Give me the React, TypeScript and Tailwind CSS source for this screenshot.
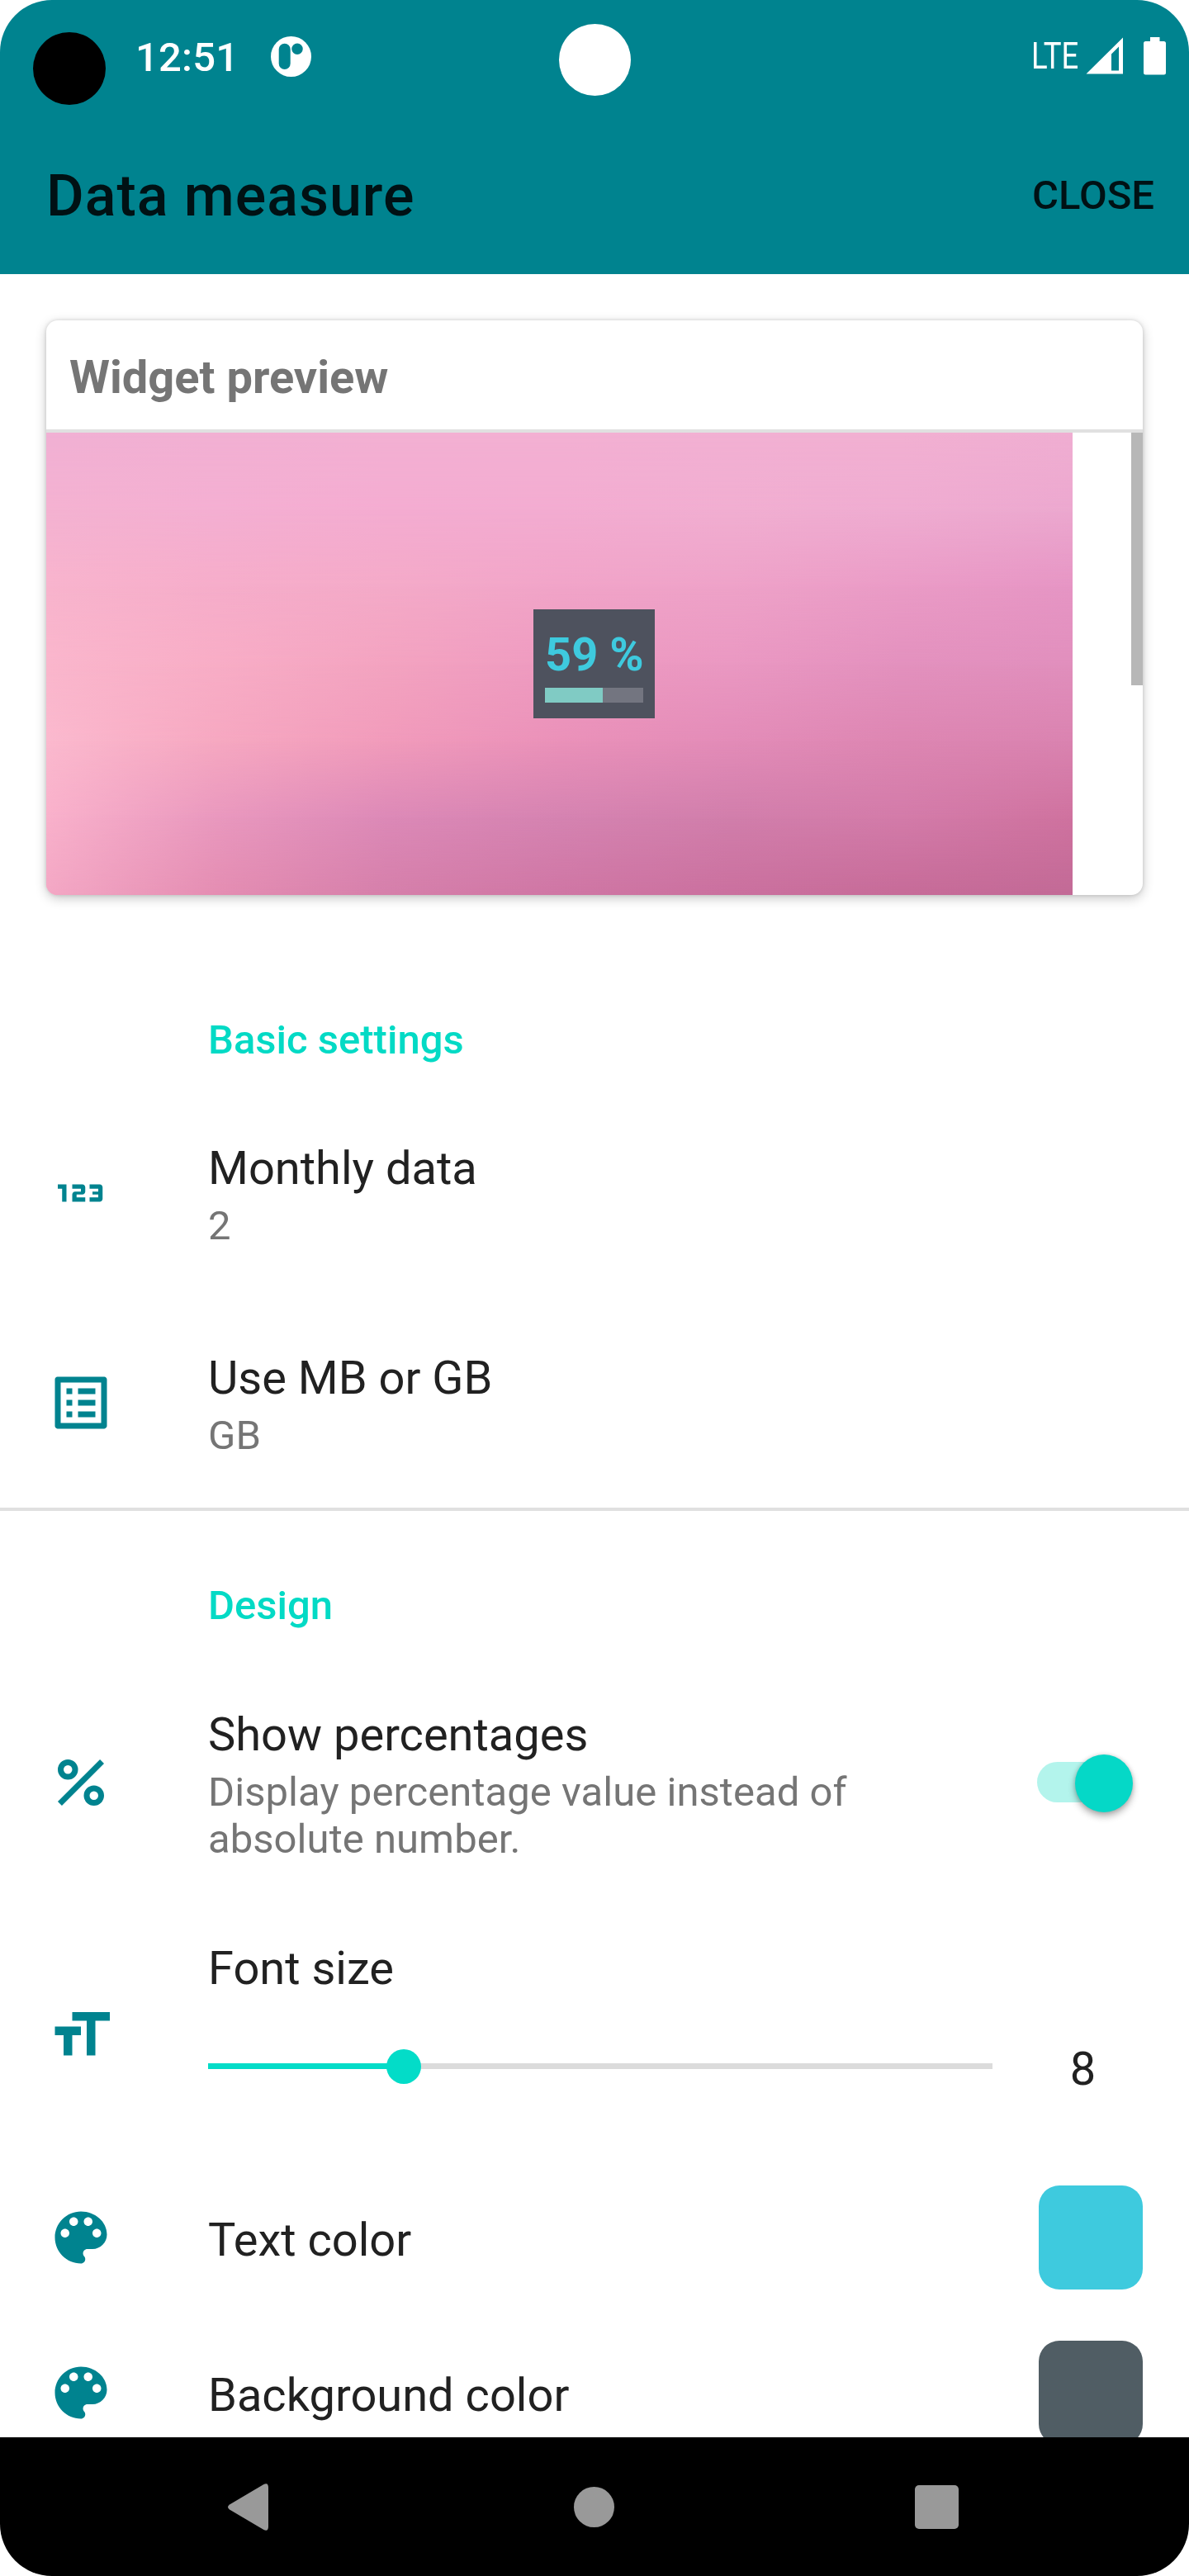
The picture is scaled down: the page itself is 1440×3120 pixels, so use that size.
import React from "react";
import { Md123, MdOutlineListAlt, MdFormatSize } from "react-icons/md";

// Wallpaper colour mesh: each row is a horizontal gradient blended into the next one below it.
const mesh = [
  ["#f1b0d4", "#f2b0d3", "#f3b0d3", "#f3b0d3", "#f2b0d3", "#f2b0d2", "#f0aed2"],
  ["#f4b2d1", "#f4afd2", "#f4acd1", "#f3acd1", "#f1aed1", "#efacd1", "#eca8cf"],
  ["#f8b4cd", "#f6adca", "#f4aac8", "#f1a4c8", "#eea2c8", "#ea9bc6", "#e695c4"],
  ["#fab6cc", "#f8adc6", "#f3a3c0", "#ee9ac0", "#ea98c2", "#e391be", "#e18fbd"],
  ["#fbb9ce", "#f6a8c1", "#f19bbb", "#ea91b9", "#e38cb8", "#dd86b2", "#da83b0"],
  ["#f9b1cb", "#e998be", "#dc89b7", "#d583b1", "#d17eab", "#d37ba9", "#cf729f"],
  ["#f3a7c4", "#e48db2", "#d57faa", "#cf76a4", "#ca709e", "#c66b98", "#c26a96"],
];

function Wallpaper() {
  return (
    <div className="absolute inset-0">
      {mesh.map((row, i) => {
        const from = ((i - 1) / (mesh.length - 1)) * 100;
        const to = (i / (mesh.length - 1)) * 100;
        const mask = i === 0 ? undefined : `linear-gradient(to bottom, transparent ${from}%, black ${to}%)`;
        return (
          <div
            key={i}
            className="absolute inset-0"
            style={{ backgroundImage: `linear-gradient(to right, ${row.join(", ")})`, maskImage: mask }}
          />
        );
      })}
    </div>
  );
}

function PercentIcon() {
  return (
    <svg className="size-[84px]" viewBox="0 0 24 24" fill="none" stroke="currentColor" strokeWidth="2">
      <circle cx="7.5" cy="7.5" r="2.5" />
      <circle cx="16.5" cy="16.5" r="2.5" />
      <path d="M4.700 19.300L19.300 4.700" />
    </svg>
  );
}

function PaletteIcon() {
  return (
    <svg className="size-[84px]" viewBox="0 0 24 24" fill="currentColor">
      <path d="M12 3c-4.970 0-9 4.030-9 9s4.030 9 9 9c.83 0 1.500-.67 1.500-1.500 0-.39-.15-.74-.39-1.010-.23-.26-.38-.61-.38-.99 0-.83.67-1.500 1.500-1.500H16c2.760 0 5-2.240 5-5 0-4.420-4.030-8-9-8zm-5.500 9c-.83 0-1.500-.67-1.500-1.500S5.670 9 6.500 9 8 9.670 8 10.500 7.330 12 6.500 12zm3-4C8.670 8 8 7.330 8 6.500S8.670 5 9.500 5s1.500.67 1.500 1.500S10.330 8 9.500 8zm5 0c-.83 0-1.500-.67-1.500-1.500S13.670 5 14.500 5s1.500.67 1.500 1.500S15.330 8 14.500 8zm3 4c-.83 0-1.500-.67-1.500-1.500S16.670 9 17.500 9s1.500.67 1.500 1.500-.67 1.500-1.500 1.500z" />
    </svg>
  );
}

function StatusBar() {
  return (
    <div className="relative flex h-[137px] shrink-0 items-start text-white">
      <div className="mt-[39px] ml-[40px] size-[88px] rounded-full bg-black" />
      <span className="mt-[41px] ml-[36px] w-[121px] text-[49px] leading-[58px] font-medium tracking-[0.2px]">12:51</span>
      <svg className="mt-[44px] ml-[43px] size-[49px]" viewBox="0 0 49 49">
        <circle cx="24.5" cy="24.5" r="24.5" fill="#fff" />
        <rect x="9.7" y="8.7" width="14" height="31.3" rx="7" fill="#00838f" />
        <circle cx="32" cy="15.2" r="6.7" fill="#00838f" />
      </svg>
      <div className="absolute top-[29px] left-[677px] size-[87px] rounded-full bg-white" />
      <span className="mt-[42px] ml-auto w-[63px] origin-left scale-x-[0.83] text-[44px] leading-[52px]">LTE</span>
      <svg className="mt-[45px] ml-[3px] h-[45px] w-[45px]" viewBox="0 0 45 45">
        <path d="M45 0.500V44.500H0.500Z M40 11.500L31 20.500V40.400H40Z" fill="#fff" fillRule="evenodd" />
      </svg>
      <svg className="mt-[45px] mr-[28px] ml-[25px] h-[46px] w-[27px]" viewBox="0 0 27 46">
        <path d="M8 0H19.500V5H24.500Q27 5 27 7.500V43Q27 45.500 24.500 45.500H2.500Q0 45.500 0 43V7.500Q0 5 2.500 5H8Z" fill="#fff" />
      </svg>
    </div>
  );
}

function WidgetPreview() {
  return (
    <div className="mx-[56px] mt-[56px] h-[696px] shrink-0 overflow-hidden rounded-[14px] bg-white shadow-[0_4px_14px_rgba(0,0,0,0.22),0_0_4px_rgba(0,0,0,0.14)]">
      <div className="h-[132px] pt-[36px] pl-[28px] text-[56px] leading-[66px] font-bold text-[#757575]">Widget preview</div>
      <div className="h-[4px] bg-[#e0e0e0]" />
      <div className="flex h-[560px] justify-between">
        <div className="relative w-[1243px]">
          <Wallpaper />
          <div className="absolute top-[214px] left-[590px] h-[132px] w-[147px] bg-[#4e525e] px-[14px] pt-[22px]">
            <div className="text-center text-[56px] leading-[66px] font-bold whitespace-nowrap text-[#3ecade]">59 %</div>
            <div className="mt-[7px] flex h-[18px] bg-[#737580]">
              <div className="w-[70px] bg-[#80cbc4]" />
            </div>
          </div>
        </div>
        <div className="h-[306px] w-[14px] bg-[#b7b7b7]" />
      </div>
    </div>
  );
}

function IconSlot({ children }: { children: React.ReactNode }) {
  return <div className="flex w-[196px] shrink-0 items-center text-[84px] text-[#00838f]">{children}</div>;
}

function Title({ children }: { children: React.ReactNode }) {
  return <div className="text-[56px] leading-[66px] text-[#212121]">{children}</div>;
}

function Summary({ children }: { children: React.ReactNode }) {
  return <div className="mt-[8px] text-[49px] leading-[57px] tracking-[0.05px] text-[#757575]">{children}</div>;
}

function Category({ children }: { children: React.ReactNode }) {
  return <div className="pl-[252px] text-[49px] leading-[57px] font-medium text-[#03dac5]">{children}</div>;
}

export default function App() {
  return (
    <div className="h-[3120px] w-[1440px] overflow-hidden bg-white font-[Roboto,sans-serif]">
      <div className="flex h-full flex-col overflow-hidden rounded-[63px] bg-white">
        <header className="flex h-[332px] shrink-0 flex-col bg-[#00838f]">
          <StatusBar />
          <div className="flex items-start justify-between pr-[42px] pl-[56px] text-[#001114]">
            <h1 className="mt-[59px] text-[70px] leading-[82px] font-medium tracking-[0.98px]">Data measure</h1>
            <button className="mt-[71px] text-[49px] leading-[57px] font-medium">CLOSE</button>
          </div>
        </header>

        <main className="flex h-[2620px] shrink-0 flex-col overflow-hidden">
          <WidgetPreview />

          <div className="h-[147px] shrink-0" />
          <Category>Basic settings</Category>
          <div className="mt-[30px] flex h-[254px] shrink-0 pl-[56px]">
            <IconSlot><Md123 /></IconSlot>
            <div className="pt-[64px]">
              <Title>Monthly data</Title>
              <Summary>2</Summary>
            </div>
          </div>
          <div className="flex h-[254px] shrink-0 pl-[56px]">
            <IconSlot><MdOutlineListAlt /></IconSlot>
            <div className="pt-[64px]">
              <Title>Use MB or GB</Title>
              <Summary>GB</Summary>
            </div>
          </div>
          <div className="h-[4px] shrink-0 bg-[#e0e0e0]" />

          <div className="h-[86px] shrink-0" />
          <Category>Design</Category>
          <div className="mt-[30px] flex h-[312px] shrink-0 pl-[56px]">
            <IconSlot><PercentIcon /></IconSlot>
            <div className="w-[848px] pt-[65px]">
              <Title>Show percentages</Title>
              <Summary>Display percentage value instead of absolute number.</Summary>
            </div>
            <div className="relative mb-[2px] ml-[156px] h-[49px] w-[112px] self-center rounded-full bg-[#b3f4ec]">
              <div className="absolute top-[-9px] left-[46px] size-[70px] rounded-full bg-[#05d8c7] shadow-[0_5px_9px_rgba(0,0,0,0.3),0_0_5px_rgba(0,0,0,0.15)]" />
            </div>
          </div>

          <div className="flex h-[284px] shrink-0 pl-[56px]">
            <div className="flex w-[196px] shrink-0 pt-[108px] text-[84px] text-[#00838f]"><MdFormatSize /></div>
            <div className="w-[950px] pt-[36px]">
              <Title>Font size</Title>
              <div className="relative mt-[82px] h-[7px] bg-[#dbdbdb]">
                <div className="h-full w-[25%] bg-[#03dcc8]" />
                <div className="absolute top-[-17px] left-[216px] size-[42px] rounded-full bg-[#03dcc8]" />
              </div>
            </div>
            <div className="w-[219px] pt-[158px] text-center text-[56px] leading-[66px] text-[#212121]">8</div>
          </div>

          <div className="mt-[17px] flex h-[188px] shrink-0 items-center pr-[56px] pl-[56px]">
            <IconSlot><PaletteIcon /></IconSlot>
            <div className="pt-[5px]"><Title>Text color</Title></div>
            <div className="ml-auto size-[126px] rounded-[25px] bg-[#3ecade]" />
          </div>
          <div className="flex h-[188px] shrink-0 items-center pr-[56px] pl-[56px]">
            <IconSlot><PaletteIcon /></IconSlot>
            <div className="pt-[5px]"><Title>Background color</Title></div>
            <div className="ml-auto size-[126px] rounded-[25px] bg-[#505d64]" />
          </div>
        </main>

        <nav className="flex h-[168px] shrink-0 items-center bg-black">
          <svg className="ml-[276px] h-[57px] w-[50px]" viewBox="0 0 50 57">
            <path d="M43 1.200Q49 -2 49 5V52Q49 59 43 55.800L2 31.500Q-2 28.500 2 25.500Z" fill="#999" />
          </svg>
          <div className="ml-[369px] size-[49px] rounded-full bg-[#999]" />
          <div className="ml-[364px] size-[53px] rounded-[5px] bg-[#999]" />
        </nav>
      </div>
    </div>
  );
}
